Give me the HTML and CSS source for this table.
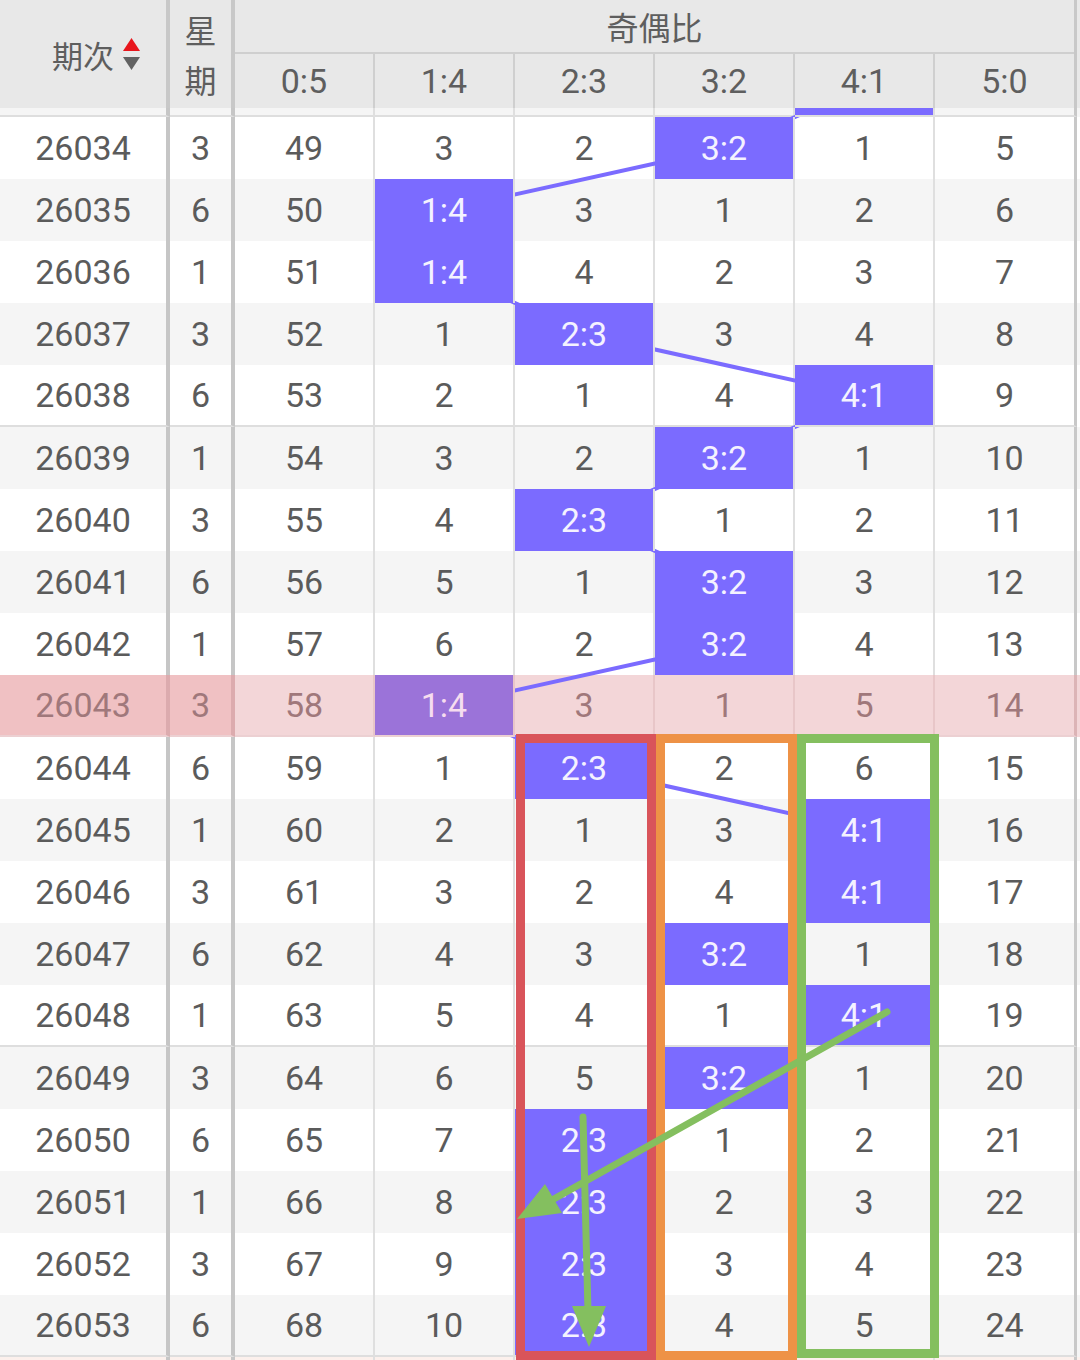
FILE: index.html
```html
<!DOCTYPE html>
<html lang="zh">
<head>
<meta charset="utf-8">
<title>奇偶比走势</title>
<link rel="stylesheet" href="styles.css">
</head>
<body>
<div class="board">
  <div class="head">
    <div class="h-period"><span class="h-label">期次<svg class="sort" viewBox="0 0 17 32"><polygon points="8.5,0 17,13 0,13" fill="#e8161c"/><polygon points="0,19 17,19 8.5,32" fill="#626262"/></svg></span></div>
    <div class="h-week">星<br>期</div>
    <div class="h-ratio">
      <div class="h-title">奇偶比</div>
      <div class="h-cols"><div>0:5</div><div>1:4</div><div>2:3</div><div>3:2</div><div>4:1</div><div>5:0</div></div>
    </div>
  </div>
  <div class="body">
    <div class="scroll">
      <div class="row alt sep part"><div class="c p"></div><div class="c w"></div><div class="c"></div><div class="c"></div><div class="c"></div><div class="c"></div><div class="c hit"></div><div class="c last"></div></div>
      <div class="row"><div class="c p">26034</div><div class="c w">3</div><div class="c">49</div><div class="c">3</div><div class="c">2</div><div class="c hit">3:2</div><div class="c">1</div><div class="c last">5</div></div>
      <div class="row alt"><div class="c p">26035</div><div class="c w">6</div><div class="c">50</div><div class="c hit">1:4</div><div class="c">3</div><div class="c">1</div><div class="c">2</div><div class="c last">6</div></div>
      <div class="row"><div class="c p">26036</div><div class="c w">1</div><div class="c">51</div><div class="c hit">1:4</div><div class="c">4</div><div class="c">2</div><div class="c">3</div><div class="c last">7</div></div>
      <div class="row alt"><div class="c p">26037</div><div class="c w">3</div><div class="c">52</div><div class="c">1</div><div class="c hit">2:3</div><div class="c">3</div><div class="c">4</div><div class="c last">8</div></div>
      <div class="row sep"><div class="c p">26038</div><div class="c w">6</div><div class="c">53</div><div class="c">2</div><div class="c">1</div><div class="c">4</div><div class="c hit">4:1</div><div class="c last">9</div></div>
      <div class="row alt"><div class="c p">26039</div><div class="c w">1</div><div class="c">54</div><div class="c">3</div><div class="c">2</div><div class="c hit">3:2</div><div class="c">1</div><div class="c last">10</div></div>
      <div class="row"><div class="c p">26040</div><div class="c w">3</div><div class="c">55</div><div class="c">4</div><div class="c hit">2:3</div><div class="c">1</div><div class="c">2</div><div class="c last">11</div></div>
      <div class="row alt"><div class="c p">26041</div><div class="c w">6</div><div class="c">56</div><div class="c">5</div><div class="c">1</div><div class="c hit">3:2</div><div class="c">3</div><div class="c last">12</div></div>
      <div class="row"><div class="c p">26042</div><div class="c w">1</div><div class="c">57</div><div class="c">6</div><div class="c">2</div><div class="c hit">3:2</div><div class="c">4</div><div class="c last">13</div></div>
      <div class="row cur sep"><div class="c p">26043</div><div class="c w">3</div><div class="c">58</div><div class="c hit">1:4</div><div class="c">3</div><div class="c">1</div><div class="c">5</div><div class="c last">14</div></div>
      <div class="row"><div class="c p">26044</div><div class="c w">6</div><div class="c">59</div><div class="c">1</div><div class="c hit">2:3</div><div class="c">2</div><div class="c">6</div><div class="c last">15</div></div>
      <div class="row alt"><div class="c p">26045</div><div class="c w">1</div><div class="c">60</div><div class="c">2</div><div class="c">1</div><div class="c">3</div><div class="c hit">4:1</div><div class="c last">16</div></div>
      <div class="row"><div class="c p">26046</div><div class="c w">3</div><div class="c">61</div><div class="c">3</div><div class="c">2</div><div class="c">4</div><div class="c hit">4:1</div><div class="c last">17</div></div>
      <div class="row alt"><div class="c p">26047</div><div class="c w">6</div><div class="c">62</div><div class="c">4</div><div class="c">3</div><div class="c hit">3:2</div><div class="c">1</div><div class="c last">18</div></div>
      <div class="row sep"><div class="c p">26048</div><div class="c w">1</div><div class="c">63</div><div class="c">5</div><div class="c">4</div><div class="c">1</div><div class="c hit">4:1</div><div class="c last">19</div></div>
      <div class="row alt"><div class="c p">26049</div><div class="c w">3</div><div class="c">64</div><div class="c">6</div><div class="c">5</div><div class="c hit">3:2</div><div class="c">1</div><div class="c last">20</div></div>
      <div class="row"><div class="c p">26050</div><div class="c w">6</div><div class="c">65</div><div class="c">7</div><div class="c hit">2:3</div><div class="c">1</div><div class="c">2</div><div class="c last">21</div></div>
      <div class="row alt"><div class="c p">26051</div><div class="c w">1</div><div class="c">66</div><div class="c">8</div><div class="c hit">2:3</div><div class="c">2</div><div class="c">3</div><div class="c last">22</div></div>
      <div class="row"><div class="c p">26052</div><div class="c w">3</div><div class="c">67</div><div class="c">9</div><div class="c hit">2:3</div><div class="c">3</div><div class="c">4</div><div class="c last">23</div></div>
      <div class="row alt sep"><div class="c p">26053</div><div class="c w">6</div><div class="c">68</div><div class="c">10</div><div class="c hit">2:3</div><div class="c">4</div><div class="c">5</div><div class="c last">24</div></div>
      <div class="row tail"><div class="c p"></div><div class="c w"></div><div class="c"></div><div class="c"></div><div class="c"></div><div class="c"></div><div class="c"></div><div class="c last"></div></div>
      <svg class="trend" width="1077" height="1252" viewBox="0 0 1077 1252">
        <polyline points="865,-22 725,40 445,102 445,164 585,226 865,288 725,350 585,412 725,474 725,536 445,598 585,660 865,722 865,784 725,846 865,908 725,970 585,1032 585,1094 585,1156 585,1218" fill="none" stroke="#7b6bff" stroke-width="4" stroke-linejoin="round"/>
      </svg>
    </div>
  </div>
  <div class="mark red"></div>
  <div class="mark orange"></div>
  <div class="mark green"></div>
  <svg class="arrows" width="1080" height="1360" viewBox="0 0 1080 1360">
    <line x1="887" y1="1012" x2="552" y2="1200" stroke="#84bf5f" stroke-width="7" stroke-linecap="round"/>
    <polygon points="517,1219 545,1184 562,1213" fill="#84bf5f"/>
    <line x1="583" y1="1117" x2="588" y2="1312" stroke="#84bf5f" stroke-width="7" stroke-linecap="round"/>
    <polygon points="589,1347 572,1306 606,1306" fill="#84bf5f"/>
  </svg>
</div>
</body>
</html>
```

FILE: styles.css
```css
* {
  box-sizing: border-box;
  margin: 0;
  padding: 0;
}

html,
body {
  background: #ffffff;
}

body {
  width: 1080px;
  height: 1360px;
  overflow: hidden;
  font-family: Roboto, "Noto Sans CJK SC", sans-serif;
  color: #5b5b5b;
}

.board {
  position: relative;
  width: 1080px;
  height: 1360px;
}

/* ---------- header ---------- */
.head {
  display: grid;
  grid-template-columns: 170px 65px 842px;
  height: 108px;
  background: #e8e8e8;
  color: #5e5e5e;
}

.h-period {
  border-right: 4px solid #c8c8c8;
  display: flex;
  align-items: center;
  justify-content: center;
}

.h-label {
  position: relative;
  font-family: "Noto Sans CJK SC", sans-serif;
  font-size: 31px;
  line-height: 1;
}

.sort {
  position: absolute;
  left: calc(100% + 9px);
  top: 50%;
  margin-top: -16px;
  width: 17px;
  height: 32px;
}

.h-week {
  border-right: 4px solid #c8c8c8;
  display: flex;
  align-items: center;
  justify-content: center;
  text-align: center;
  font-family: "Noto Sans CJK SC", sans-serif;
  font-size: 32px;
  line-height: 50px;
}

.h-ratio {
  border-right: 3px solid #c8c8c8;
  display: flex;
  flex-direction: column;
}

.h-title {
  height: 54px;
  border-bottom: 2px solid #cfcfcf;
  display: flex;
  align-items: center;
  justify-content: center;
  font-family: "Noto Sans CJK SC", sans-serif;
  font-size: 32px;
}

.h-cols {
  flex: 1;
  display: grid;
  grid-template-columns: repeat(5, 140px) 139px;
}

.h-cols div {
  border-right: 2px solid #cfcfcf;
  display: flex;
  align-items: center;
  justify-content: center;
  font-size: 34px;
}

.h-cols div:last-child {
  border-right: 0;
}

/* ---------- body rows ---------- */
.body {
  height: 1252px;
  overflow: hidden;
}

.scroll {
  position: relative;
}

.row {
  display: grid;
  grid-template-columns: 170px 65px repeat(5, 140px) 142px;
  height: 62px;
  background: #ffffff;
}

.row.alt {
  background: #f5f5f5;
}

.row.part,
.row.part .c {
  height: 9px;
}

.c {
  display: flex;
  align-items: center;
  justify-content: center;
  height: 62px;
  border-right: 2px solid #dfdfdf;
  font-size: 34px;
}

.c.p,
.c.w {
  border-right: 4px solid #c6c6c6;
}

.c.last {
  border-right: 3px solid #c8c8c8;
}

.row.sep .c {
  border-bottom: 2px solid #dedede;
}

.c.hit {
  position: relative;
  z-index: 2;
  background: #7b6bff;
  color: #f4f2ff;
}

.row.cur {
  background: #f3d6d8;
  color: #a0787b;
}

.row.cur .c {
  border-right-color: #e8c6c8;
  border-bottom-color: #ecd0d2;
}

.row.cur .c.p,
.row.cur .c.w {
  background: #f0c1c3;
  border-right-color: #dcabae;
}

.row.cur .c.last {
  border-right-color: #dcb4b6;
}

.row.cur .c.hit {
  background: #9b73d9;
  color: #f6dcef;
}

.row.tail {
  background: #fcf0ec;
}

.trend {
  position: absolute;
  left: 0;
  top: 0;
  z-index: 1;
  overflow: visible;
}

/* ---------- annotations ---------- */
.mark {
  position: absolute;
  z-index: 10;
  border: 9px solid;
}

.mark.red {
  left: 516px;
  top: 734px;
  width: 140px;
  height: 626px;
  border-color: #d9545a;
}

.mark.orange {
  left: 656px;
  top: 734px;
  width: 141px;
  height: 626px;
  border-color: #ee9246;
}

.mark.green {
  left: 797px;
  top: 734px;
  width: 142px;
  height: 624px;
  border-color: #84bf5f;
}

.arrows {
  position: absolute;
  left: 0;
  top: 0;
  z-index: 11;
}
```
